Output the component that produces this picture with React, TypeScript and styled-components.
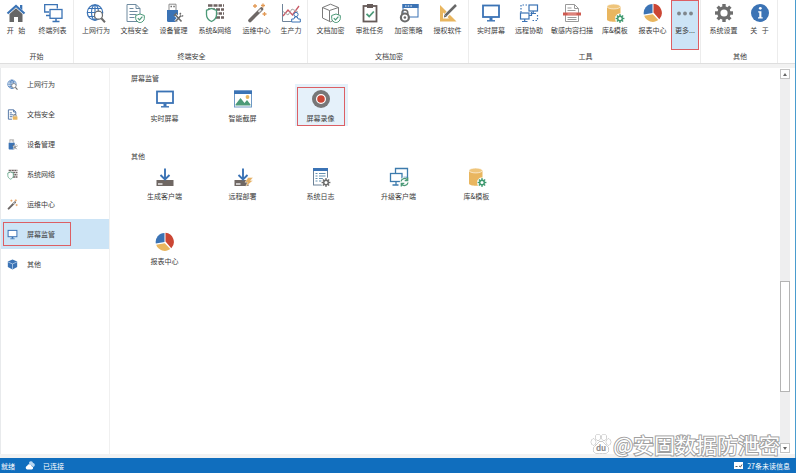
import React from "react";
import styled, { createGlobalStyle, css } from "styled-components";

const GlobalStyle = createGlobalStyle`
  * { box-sizing: border-box; }
  body {
    margin: 0;
    background: #fff;
    color: #3c3c3c;
    font-family: "Noto Sans CJK SC", "Liberation Sans", sans-serif;
    font-size: 7px;
    line-height: 10px;
  }
  button {
    margin: 0;
    padding: 0;
    border: 0;
    background: none;
    color: inherit;
    font: inherit;
    cursor: pointer;
  }
`;

const BLUE = "#3b73b5";
const GREY = "#6b6b6b";
const GREEN = "#4c9a78";
const GOLD = "#e9b65f";
const RED = "#cb4634";

/* ---------- icons ---------- */

type IconName =
  | "home" | "terminals" | "globe" | "docShield" | "usb" | "firewall" | "wand" | "chart"
  | "boxShield" | "clipboard" | "policy" | "ruler" | "monitor" | "remote" | "scan"
  | "database" | "pie" | "more" | "gear" | "info" | "image" | "record" | "download"
  | "deploy" | "log" | "upgrade" | "docLock" | "cube";

const gearTeeth = (cx: number, cy: number, r: number, w: number, color: string) =>
  [0, 45, 90, 135].map((a) => (
    <rect key={a} x={cx - w / 2} y={cy - r} width={w} height={r * 2} fill={color} transform={`rotate(${a} ${cx} ${cy})`} />
  ));

const MiniGear = ({ color }: { color: string }) => (
  <g>
    <circle cx="15" cy="15.5" r="5" fill="#fff" />
    {gearTeeth(15, 15.5, 4.4, 1.4, color)}
    <circle cx="15" cy="15.5" r="3" fill={color} />
    <circle cx="15" cy="15.5" r="1.5" fill="#fff" />
  </g>
);

const MiniShield = () => (
  <g>
    <path d="M15 11l4.300 1.500v3c0 2-1.800 3.500-4.300 4.400-2.500-.9-4.300-2.400-4.300-4.400v-3z" fill="#fff" stroke={GREEN} />
    <path d="M12.800 15.200l1.700 1.700 2.900-3.200" fill="none" stroke={GREEN} strokeWidth="1.200" />
  </g>
);

const drawings: Record<IconName, React.ReactNode> = {
  home: (
    <g>
      <path d="M3.500 11L10 5.200l6.500 5.800V19h-4.500v-5H8v5H3.500z" fill="#666" />
      <path d="M14 2h2.300v5L14 5z" fill={BLUE} />
      <path d="M1.500 10.500L10 3l8.500 7.500" fill="none" stroke={BLUE} strokeWidth="2.200" />
    </g>
  ),
  terminals: (
    <g fill="none" stroke={BLUE} strokeWidth="1.300">
      <path d="M6 9H1.700V1.700h12.600v3.800M3 12.500h4" />
      <rect x="7" y="6.500" width="12" height="8.800" />
      <path d="M13 15.500v2.500M9.500 18.400h7" strokeWidth="1.500" />
    </g>
  ),
  globe: (
    <g fill="none" stroke={BLUE} strokeWidth="1.200">
      <circle cx="9" cy="9.500" r="7.700" />
      <ellipse cx="9" cy="9.500" rx="3.500" ry="7.700" />
      <path d="M9 1.800v15.400M1.300 9.500h15.400M2.500 5.500h13M2.500 13.500h13" />
      <circle cx="12.500" cy="12.200" r="4" fill="#fff" stroke={GREY} />
      <path d="M15.300 15.300l3.700 3.900" stroke={GREY} strokeWidth="2" />
    </g>
  ),
  docShield: (
    <g>
      <path d="M2 1.500h9l4 4V18.500H2z" fill="#fff" stroke="#6f8ba0" />
      <path d="M11 1.500v4h4M4.500 5.500h4M4.500 8.500h8M4.500 11.500h7M4.500 14.500h5" fill="none" stroke="#6f8ba0" />
      <MiniShield />
    </g>
  ),
  usb: (
    <g>
      <path d="M5 7V1.200h7V7" fill="#fff" stroke="#8b8b8b" />
      <path d="M6.500 3.500h1.500M9.300 3.500h1.500" stroke={GREY} strokeWidth="1.500" />
      <path d="M3 7h11v10.500q0 1.500-1.500 1.500h-8q-1.500 0-1.500-1.500z" fill={BLUE} />
      <path d="M11.500 12l6 6.500M17.500 12l-6 6.500" stroke="#fff" strokeWidth="3" />
      <path d="M11 11.500l6.500 7M17 12.500l-5.500 6" stroke={GREY} strokeWidth="1.600" />
      <path d="M9.800 12.700l3-2.700M15.800 11.500l1-1.500M17.500 13.500l1.700-1" stroke={GREY} strokeWidth="1.400" />
    </g>
  ),
  firewall: (
    <g>
      <path d="M3 2.500h16M3 6.500h16M8 10.500h11M11 14.500h8" stroke="#6e6260" strokeWidth="2.600" />
      <path d="M8 1v3M13 1v3M17.500 1v3M5.500 5v3M10.500 5v3M15.500 5v3M13 9v3M17.500 9v3M15.500 13v3" stroke="#fff" />
      <path d="M6.500 5.500l5 1.800v4.500c0 3.300-2 5.300-5 6.700-3-1.400-5-3.400-5-6.700V7.300z" fill="#fff" stroke={GREEN} strokeWidth="1.300" />
    </g>
  ),
  wand: (
    <g>
      <path d="M3 17.500L14.500 6" stroke="#6e6866" strokeWidth="3.600" strokeLinecap="round" />
      <path d="M11.500 9l2.500-2.500" stroke="#dedede" strokeWidth="2" />
      <path d="M8 1v4M6 3h4M16 .5v4M14 2.500h4M17.500 9v4M15.500 11h4" stroke="#e39a55" strokeWidth="1.300" />
    </g>
  ),
  chart: (
    <g fill="none">
      <path d="M1.500 1v17.500h17" stroke="#70849a" />
      <path d="M2 13l5-6 4.500 5L18 3" stroke="#c95a66" strokeWidth="1.300" />
      <path d="M2 8.500l5 3.500 4-6 6 3" stroke="#a9a9a9" />
      <circle cx="15" cy="11.500" r="2.100" fill="#fff" stroke={BLUE} />
      <path d="M13.700 14h2.600l.8 2h2.200v3h-8.600v-3h2.200z" fill="#fff" stroke={BLUE} />
    </g>
  ),
  boxShield: (
    <g>
      <path d="M1.500 4.500l8-3.300 8 3.300V15l-8 3.800-8-3.800zM1.500 4.500l7 3 9-3M8.500 7.500v11" fill="none" stroke="#7b7b7b" strokeLinejoin="round" />
      <MiniShield />
    </g>
  ),
  clipboard: (
    <g>
      <rect x="3.500" y="3" width="13" height="15.500" fill="#fff" stroke="#665b59" strokeWidth="1.800" />
      <rect x="7" y="1" width="6" height="4" fill="#665b59" />
      <path d="M6.500 10.800l2.700 2.700 4.600-5" fill="none" stroke={GREEN} strokeWidth="1.800" />
    </g>
  ),
  policy: (
    <g>
      <rect x="4" y="1.500" width="15" height="12.500" fill="#fff" stroke={BLUE} />
      <rect x="3.500" y="1" width="16" height="4" fill={BLUE} />
      <path d="M6 3h1.500M8.700 3h1.500M11.400 3h1.500" stroke="#fff" />
      <path d="M3 12V9.800a2.900 2.900 0 0 1 5.800 0V12" fill="none" stroke={GREY} strokeWidth="1.500" />
      <circle cx="5.900" cy="14.500" r="4" fill="#fff" stroke={GREY} strokeWidth="2.200" />
      <circle cx="5.900" cy="14.500" r="1.300" fill={GREY} />
    </g>
  ),
  ruler: (
    <g>
      <path fillRule="evenodd" d="M2 2v16.500h16.500zM5 9.500l6 6H5z" fill={GOLD} />
      <path d="M6.500 14L16.500 3.500" stroke="#fff" strokeWidth="4.500" />
      <path d="M7.500 12.500L18 2" stroke="#686868" strokeWidth="2.500" />
      <path d="M5.800 14.500l.7-3 2.200 2.200z" fill="#686868" />
    </g>
  ),
  monitor: (
    <g>
      <rect x="2" y="2.500" width="16" height="11.500" fill="#fff" stroke={BLUE} strokeWidth="1.800" />
      <path d="M10 14.500v3" stroke={BLUE} strokeWidth="3" />
      <path d="M6 17.800h8" stroke={BLUE} strokeWidth="1.400" />
    </g>
  ),
  remote: (
    <g fill="none" stroke={BLUE} strokeWidth="1.200">
      <path d="M2 9.500V2h7M18.500 12v5.500H12" strokeDasharray="1.500 1.500" />
      <rect x="10" y="2" width="8.500" height="6" fill="#fff" />
      <path d="M14.200 8v2.500M11.500 10.500h5.500" />
      <rect x="1.500" y="10" width="8.500" height="6" fill="#fff" />
      <path d="M5.700 16v2.500M3 18.500h5.500M10 12.500h2.500V9" />
    </g>
  ),
  scan: (
    <g>
      <path d="M3.500 1.500h9l4 4v13h-13z" fill="#fff" stroke="#9a9a9a" />
      <path d="M12.500 1.500v4h4M5.500 5h4M5.500 7.500h8M5.500 14.500h9M5.500 16.500h9" fill="none" stroke="#9a9a9a" />
      <rect x="1" y="9.500" width="18" height="3" fill="#cf5a50" />
      <path d="M5.500 11h9" stroke="#f3c2bc" strokeWidth=".8" />
    </g>
  ),
  database: (
    <g>
      <path d="M2 3.500v13c0 3 13.500 3 13.500 0v-13z" fill={GOLD} />
      <ellipse cx="8.700" cy="3.500" rx="6.700" ry="2.400" fill="#efc57b" stroke="#fff" strokeWidth=".6" />
      <MiniGear color="#3f9a70" />
    </g>
  ),
  pie: (
    <g>
      <path d="M9.500 10V1A9 9 0 0 0 .8 11.500z" fill={BLUE} />
      <path d="M10.500 9.500V.8a9.200 9.200 0 0 1 5.800 15.500z" fill={RED} />
      <path d="M9.800 11.200l5.500 5.800A9 9 0 0 1 1.200 12.700z" fill={GOLD} />
    </g>
  ),
  more: (
    <g fill="#7f868c">
      <circle cx="4" cy="10.500" r="1.900" />
      <circle cx="10" cy="10.500" r="1.900" />
      <circle cx="16" cy="10.500" r="1.900" />
    </g>
  ),
  gear: (
    <g>
      {gearTeeth(10, 10, 9, 3.4, "#6e6e6e")}
      <circle cx="10" cy="10" r="6.700" fill="#6e6e6e" />
      <circle cx="10" cy="10" r="3.600" fill="#fff" />
    </g>
  ),
  info: (
    <g>
      <circle cx="10" cy="10" r="9" fill={BLUE} />
      <circle cx="10.300" cy="5.300" r="1.400" fill="#fff" />
      <path d="M8.200 8.300h3.200v6h1.300v1.200H8v-1.200h1.300V9.500H8.200z" fill="#fff" />
    </g>
  ),
  image: (
    <g>
      <rect x="1.500" y="2" width="17" height="16" fill="#fff" stroke="#6e98c5" />
      <rect x="1" y="1.500" width="18" height="3.500" fill={BLUE} />
      <path d="M2.500 16.500v-1L7.500 9l4 5 2.500-3 3.500 4.500v1z" fill={GREEN} />
      <circle cx="14.500" cy="8" r="1.900" fill={GOLD} />
    </g>
  ),
  record: (
    <g>
      <circle cx="10" cy="10" r="9" fill="#777" />
      <circle cx="10" cy="10" r="4.400" fill={RED} stroke="#fff" strokeWidth="1.200" />
    </g>
  ),
  download: (
    <g>
      <rect x="1.500" y="13" width="17" height="6" fill="#6f6763" />
      <path d="M3 17h4.500" stroke="#fff" strokeWidth="1.300" />
      <path d="M10 1.500v10.500M5.500 8l4.500 4.500L14.500 8" fill="none" stroke={BLUE} strokeWidth="1.900" />
    </g>
  ),
  deploy: (
    <g>
      <rect x="1.500" y="13" width="14" height="6" fill="#6f6763" />
      <path d="M3 17h4.500" stroke="#fff" strokeWidth="1.300" />
      <path d="M10 1.500v10.500M5.500 8l4.500 4.500L14.500 8" fill="none" stroke={BLUE} strokeWidth="1.900" />
      <path d="M15 10.500h5l-2.500 3h2.500L12.500 19.800l2-4.500h-2.500z" fill="#e5b064" stroke="#fff" strokeWidth=".4" />
    </g>
  ),
  log: (
    <g>
      <rect x="2.500" y="1.500" width="14" height="16.500" fill="#fff" stroke="#6c8298" />
      <rect x="2" y="1" width="15" height="3" fill={BLUE} />
      <path d="M4.500 6.500h2M8 6.500h6.500M4.500 9h2M8 9h6.500M4.500 11.500h2M8 11.500h4M4.500 14h2M8 14h3" stroke="#6591b0" />
      <MiniGear color={GREY} />
    </g>
  ),
  upgrade: (
    <g fill="none" stroke="#3d7bad" strokeWidth="1.300">
      <path d="M6.500 6V1.500h12v9h-4" />
      <rect x="1.500" y="6.500" width="11.500" height="8" fill="#fff" />
      <path d="M7 14.500V18M3.500 18h6" />
      <circle cx="15.500" cy="15" r="4.700" fill="#fff" stroke="none" />
      <path d="M12 14.500a3.600 3.600 0 0 1 6.500-1.500M19 15.500a3.600 3.600 0 0 1-6.500 1.500M18.700 10.500V13.500h-3M12.300 19.500v-3h3" stroke={GREEN} />
    </g>
  ),
  docLock: (
    <g>
      <path d="M2.500 18.500V1.500H12l4 4v5M12 1.500v4h4M2.500 18.500H9" fill="none" stroke="#5779a8" strokeWidth="1.800" />
      <path d="M5 7h4M5 10.500h7M5 14h5" stroke="#5779a8" strokeWidth="1.800" />
      <path d="M12.500 14v-2a2 2 0 0 1 4 0v2" fill="none" stroke={GREY} strokeWidth="1.800" />
      <rect x="10.500" y="13.500" width="8.500" height="6" fill={GOLD} />
    </g>
  ),
  cube: (
    <g>
      <path d="M10 1l8.500 3.500v10L10 19l-8.500-4.500v-10z" fill={BLUE} />
      <path d="M2 5.500l8 3.500 8-3.500M10 9v9" fill="none" stroke="#cfe2f5" strokeWidth="1.200" />
    </g>
  ),
};

const Svg = styled.svg<{ $size: number }>`
  display: block;
  flex: none;
  width: ${(p) => p.$size}px;
  height: ${(p) => p.$size}px;
`;

const Icon = ({ name, size = 20 }: { name: IconName; size?: number }) => (
  <Svg $size={size} viewBox="0 0 20 20" aria-hidden="true">
    {drawings[name]}
  </Svg>
);

/* ---------- layout ---------- */

const Shell = styled.div`
  display: flex;
  flex-direction: column;
  min-height: 100vh;
  background: #f2f2f2;
`;

const Frame = styled.div`
  flex: 1;
  display: flex;
  flex-direction: column;
  border-right: 1px solid #4a9cce;
`;

const Ribbon = styled.header`
  display: flex;
  background: #fff;
  border-bottom: 1px solid #dedede;
`;

const RibbonGroup = styled.section<{ $flush?: boolean }>`
  display: flex;
  flex-direction: column;
  padding: ${(p) => (p.$flush ? "0" : "0 1px 0 3px")};
  border-right: 1px solid #ececec;
`;

const RibbonTools = styled.div`
  display: flex;
  height: 50px;
`;

const RibbonCaption = styled.div`
  height: 13px;
  line-height: 13px;
  text-align: center;
`;

const RibbonButton = styled.button<{ $width: number; $active?: boolean }>`
  display: flex;
  flex-direction: column;
  align-items: center;
  gap: 2px;
  width: ${(p) => p.$width}px;
  padding-top: 3px;
  white-space: pre;
  ${(p) =>
    p.$active &&
    css`
      background: #cce4f6;
      box-shadow: inset 0 0 0 1px #dc5f64;
    `}
`;

const Workspace = styled.div`
  flex: 1;
  display: flex;
  margin: 4px 0;
  background: #fff;
`;

const Sidebar = styled.nav`
  display: flex;
  flex-direction: column;
  width: 110px;
  padding-top: 1px;
  border-left: 1px solid #e8eaec;
  border-right: 1px solid #f0f0f0;
`;

const SideButton = styled.button<{ $active?: boolean }>`
  display: flex;
  align-items: center;
  height: 30px;
  padding: 0 2px;
  background: ${(p) => (p.$active ? "#cce4f6" : "transparent")};
`;

const SideLabel = styled.span<{ $active?: boolean }>`
  display: flex;
  align-items: center;
  gap: 9px;
  width: 68px;
  height: 24px;
  padding-left: 3px;
  border: 1px solid ${(p) => (p.$active ? "#dc5f64" : "transparent")};
`;

const Content = styled.main`
  flex: 1;
  padding: 4px 16px;
`;

const SectionTitle = styled.h2`
  margin: 0;
  padding-left: 5px;
  font-size: 7px;
  font-weight: 400;
  line-height: 12px;
`;

const TileGrid = styled.div`
  display: grid;
  grid-template-columns: repeat(5, 78px);
  row-gap: 23px;
  margin-bottom: 24px;
`;

const Tile = styled.button<{ $active?: boolean }>`
  justify-self: center;
  width: 53px;
  height: 42px;
  padding: 3px 3px 0 2px;
  background: ${(p) => (p.$active ? "#e5f1fa" : "transparent")};
`;

const TileBody = styled.span<{ $active?: boolean }>`
  display: flex;
  flex-direction: column;
  align-items: center;
  gap: 4px;
  height: 39px;
  padding-top: 1px;
  border: 1px solid ${(p) => (p.$active ? "#dc5f64" : "transparent")};
`;

const ScrollRail = styled.div`
  display: flex;
  flex-direction: column;
  width: 10px;
  margin: 1px 5px 1px 0;
  background: #eeeeef;
`;

const ScrollArrow = styled.button`
  display: flex;
  align-items: center;
  justify-content: center;
  height: 10px;
  border: 1px solid #c4c4c4;
  background: #fff;
`;

const ScrollSpace = styled.div<{ $share: number }>`
  flex: ${(p) => p.$share};
`;

const ScrollThumb = styled.div`
  flex: 109;
  border: 1px solid #b4b4b4;
  background: #fff;
`;

const StatusBar = styled.footer`
  display: flex;
  align-items: center;
  gap: 10px;
  height: 15px;
  padding: 0 6px 0 1px;
  background: #106ebe;
  color: #fff;
`;

const StatusItem = styled.span`
  display: flex;
  align-items: center;
  gap: 8px;
`;

const Messages = styled.button`
  display: flex;
  align-items: center;
  gap: 4px;
  margin-left: auto;
`;

const Watermark = styled.div`
  position: absolute;
  right: 16px;
  bottom: 15px;
  display: flex;
  align-items: center;
  gap: 1px;
  color: #fff;
  font-size: 21px;
  line-height: 28px;
  -webkit-text-stroke: 2px #a0a0a0;
  paint-order: stroke fill;
  pointer-events: none;
`;

const Paw = styled.svg`
  width: 22px;
  height: 22px;
  overflow: visible;
`;

const PawText = styled.text`
  font-size: 8px;
  font-weight: 700;
  fill: #8c8c8c;
  stroke: none;
  -webkit-text-stroke: 0;
`;

/* ---------- data ---------- */

type Tool = { icon: IconName; label: string; width: number; active?: boolean };

const ribbon: { caption: string; tools: Tool[] }[] = [
  {
    caption: "开始",
    tools: [
      { icon: "home", label: "开   始", width: 32 },
      { icon: "terminals", label: "终端列表", width: 41 },
    ],
  },
  {
    caption: "终端安全",
    tools: [
      { icon: "globe", label: "上网行为", width: 38 },
      { icon: "docShield", label: "文档安全", width: 39 },
      { icon: "usb", label: "设备管理", width: 39 },
      { icon: "firewall", label: "系统&网络", width: 44 },
      { icon: "wand", label: "运维中心", width: 39 },
      { icon: "chart", label: "生产力", width: 30 },
    ],
  },
  {
    caption: "文档加密",
    tools: [
      { icon: "boxShield", label: "文档加密", width: 39 },
      { icon: "clipboard", label: "审批任务", width: 39 },
      { icon: "policy", label: "加密策略", width: 39 },
      { icon: "ruler", label: "授权软件", width: 39 },
    ],
  },
  {
    caption: "工具",
    tools: [
      { icon: "monitor", label: "实时屏幕", width: 38 },
      { icon: "remote", label: "远程协助", width: 38 },
      { icon: "scan", label: "敏感内容扫描", width: 48 },
      { icon: "database", label: "库&模板", width: 38 },
      { icon: "pie", label: "报表中心", width: 37 },
      { icon: "more", label: "更多...", width: 28, active: true },
    ],
  },
  {
    caption: "其他",
    tools: [
      { icon: "gear", label: "系统设置", width: 39 },
      { icon: "info", label: "关   于", width: 33 },
    ],
  },
];

const sideItems: { icon: IconName; label: string; active?: boolean }[] = [
  { icon: "globe", label: "上网行为" },
  { icon: "docLock", label: "文档安全" },
  { icon: "usb", label: "设备管理" },
  { icon: "firewall", label: "系统网络" },
  { icon: "wand", label: "运维中心" },
  { icon: "monitor", label: "屏幕监管", active: true },
  { icon: "cube", label: "其他" },
];

const sections: { title: string; tiles: { icon: IconName; label: string; active?: boolean }[] }[] = [
  {
    title: "屏幕监管",
    tiles: [
      { icon: "monitor", label: "实时屏幕" },
      { icon: "image", label: "智能截屏" },
      { icon: "record", label: "屏幕录像", active: true },
    ],
  },
  {
    title: "其他",
    tiles: [
      { icon: "download", label: "生成客户端" },
      { icon: "deploy", label: "远程部署" },
      { icon: "log", label: "系统日志" },
      { icon: "upgrade", label: "升级客户端" },
      { icon: "database", label: "库&模板" },
      { icon: "pie", label: "报表中心" },
    ],
  },
];

const Arrow = ({ down }: { down?: boolean }) => (
  <svg width="4" height="3" viewBox="0 0 4 3" aria-hidden="true">
    <path d={down ? "M0 0h4L2 3z" : "M0 3h4L2 0z"} fill="#666" />
  </svg>
);

export default function App() {
  return (
    <Shell>
      <GlobalStyle />
      <Frame>
        <Ribbon>
          {ribbon.map((group, index) => (
            <RibbonGroup key={group.caption} $flush={index === 0}>
              <RibbonTools>
                {group.tools.map((tool) => (
                  <RibbonButton key={tool.label} type="button" $width={tool.width} $active={tool.active}>
                    <Icon name={tool.icon} />
                    <span>{tool.label}</span>
                  </RibbonButton>
                ))}
              </RibbonTools>
              <RibbonCaption>{group.caption}</RibbonCaption>
            </RibbonGroup>
          ))}
        </Ribbon>

        <Workspace>
          <Sidebar>
            {sideItems.map((item) => (
              <SideButton key={item.label} type="button" $active={item.active}>
                <SideLabel $active={item.active}>
                  <Icon name={item.icon} size={11} />
                  {item.label}
                </SideLabel>
              </SideButton>
            ))}
          </Sidebar>

          <Content>
            {sections.map((section) => (
              <section key={section.title}>
                <SectionTitle>{section.title}</SectionTitle>
                <TileGrid>
                  {section.tiles.map((tile) => (
                    <Tile key={tile.label} type="button" $active={tile.active}>
                      <TileBody $active={tile.active}>
                        <Icon name={tile.icon} />
                        <span>{tile.label}</span>
                      </TileBody>
                    </Tile>
                  ))}
                </TileGrid>
              </section>
            ))}
          </Content>

          <ScrollRail>
            <ScrollArrow type="button" aria-label="向上滚动">
              <Arrow />
            </ScrollArrow>
            <ScrollSpace $share={203} />
            <ScrollThumb />
            <ScrollSpace $share={51} />
            <ScrollArrow type="button" aria-label="向下滚动">
              <Arrow down />
            </ScrollArrow>
          </ScrollRail>
        </Workspace>
      </Frame>

      <StatusBar>
        <span>就绪</span>
        <StatusItem>
          <svg width="10" height="9" viewBox="0 0 10 9" aria-hidden="true">
            <path d="M4 2.500a2 2 0 0 1 4-.5 2 2 0 0 1 1.500 3L8.500 6z" fill="#b9d8f2" />
            <path d="M2 8.500a2 2 0 0 1 .2-3.800 2.400 2.400 0 0 1 4.500.5A1.700 1.700 0 0 1 7 8.500z" fill="#fff" />
          </svg>
          已连接
        </StatusItem>
        <Messages type="button">
          <svg width="9" height="7" viewBox="0 0 9 7" aria-hidden="true">
            <rect width="9" height="7" fill="#fff" />
            <path d="M1.500 4.500h2M5 4l1.500 1L8 2.500" fill="none" stroke="#55595e" />
          </svg>
          27条未读信息
        </Messages>
      </StatusBar>

      <Watermark>
        <Paw viewBox="0 0 22 22" aria-hidden="true">
          <g fill="#fff" stroke="#a0a0a0" strokeWidth="1">
            <ellipse cx="3.500" cy="9" rx="2.300" ry="3" />
            <ellipse cx="8" cy="4.300" rx="2.300" ry="3" />
            <ellipse cx="14" cy="4.300" rx="2.300" ry="3" />
            <ellipse cx="18.500" cy="9" rx="2.300" ry="3" />
            <path d="M11 8.500c2.500 0 3.500 2.300 5 3.800 1.800 1.700 3 3 2.500 5.200-.6 2.500-3 3-7.500 3s-6.900-.5-7.500-3c-.5-2.200.7-3.500 2.500-5.200 1.500-1.500 2.500-3.800 5-3.800z" />
          </g>
          <PawText x="11" y="18" textAnchor="middle">du</PawText>
        </Paw>
        <span>@安固数据防泄密</span>
      </Watermark>
    </Shell>
  );
}
